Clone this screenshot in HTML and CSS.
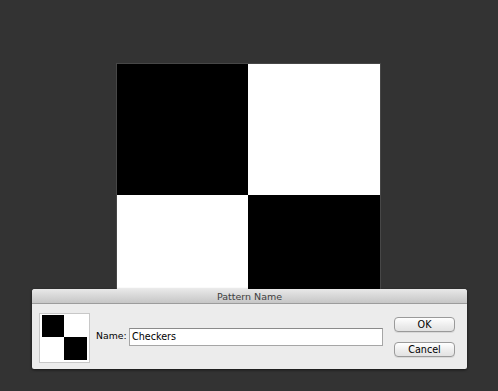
FILE: index.html
```html
<!DOCTYPE html>
<html>
<head>
<meta charset="utf-8">
<link rel="stylesheet" href="styles.css">
</head>
<body>
<div class="stage">
  <div class="canvas">
    <div class="cell black"></div>
    <div class="cell white"></div>
    <div class="cell white"></div>
    <div class="cell black"></div>
  </div>
</div>
<div class="dialog">
  <div class="titlebar">Pattern Name</div>
  <div class="body">
    <div class="thumb">
      <div class="mini">
        <div class="black"></div>
        <div class="white"></div>
        <div class="white"></div>
        <div class="black"></div>
      </div>
    </div>
    <label class="label">Name:</label>
    <div class="input">Checkers</div>
    <div class="buttons">
      <div class="btn">OK</div>
      <div class="btn">Cancel</div>
    </div>
  </div>
</div>
</body>
</html>
```
FILE: styles.css
```css
html, body {
  margin: 0;
  padding: 0;
  width: 498px;
  height: 391px;
  background: #333333;
  overflow: hidden;
  font-family: "DejaVu Sans", sans-serif;
}
.stage {
  padding-top: 64px;
  padding-left: 117px;
}
.canvas {
  width: 263px;
  height: 263px;
  display: grid;
  grid-template-columns: 131px 132px;
  grid-template-rows: 131px 132px;
  box-shadow: 0 0 0 1px rgba(110,110,110,0.35);
}
.black { background: #000; }
.white { background: #fff; }
.dialog {
  position: absolute;
  left: 32px;
  top: 289px;
  width: 435px;
  height: 80px;
  background: #ececec;
  border-radius: 3px 3px 2px 2px;
  box-shadow: 0 1px 3px rgba(0,0,0,0.6);
  overflow: hidden;
}
.titlebar {
  height: 14px;
  line-height: 15px;
  text-align: center;
  font-size: 9.5px;
  color: #404040;
  background: linear-gradient(#e8e8e8, #c6c6c6);
  border-bottom: 1px solid #9c9c9c;
}
.body {
  display: flex;
  align-items: flex-start;
  position: relative;
  height: 65px;
}
.thumb {
  margin-left: 7px;
  margin-top: 9px;
  width: 51px;
  height: 50px;
  border: 1px solid #c8c8c8;
  background: #fff;
  padding: 1px 2px 2px 2px;
  box-sizing: border-box;
}
.mini {
  display: grid;
  grid-template-columns: 22px 23px;
  grid-template-rows: 22px 23px;
  width: 45px;
  height: 45px;
}
.label {
  flex: none;
  width: 30px;
  white-space: nowrap;
  margin-left: 6px;
  margin-top: 26px;
  font-size: 9.3px;
  color: #000;
}
.input {
  margin-left: 3px;
  margin-top: 24px;
  width: 254px;
  height: 18px;
  box-sizing: border-box;
  background: #fff;
  border: 1px solid #a6a6a6;
  border-top-color: #8a8a8a;
  font-size: 9.6px;
  line-height: 16px;
  padding-left: 2px;
  color: #000;
}
.buttons {
  margin-left: 11px;
  margin-top: 13px;
  display: flex;
  flex-direction: column;
  gap: 10px;
}
.btn {
  width: 61px;
  height: 15px;
  box-sizing: border-box;
  border: 1px solid #9a9a9a;
  border-radius: 4px;
  background: linear-gradient(#ffffff, #ececec 60%, #e2e2e2);
  font-size: 9.6px;
  line-height: 13px;
  text-align: center;
  color: #000;
  box-shadow: 0 1px 0 rgba(0,0,0,0.08);
}
```
